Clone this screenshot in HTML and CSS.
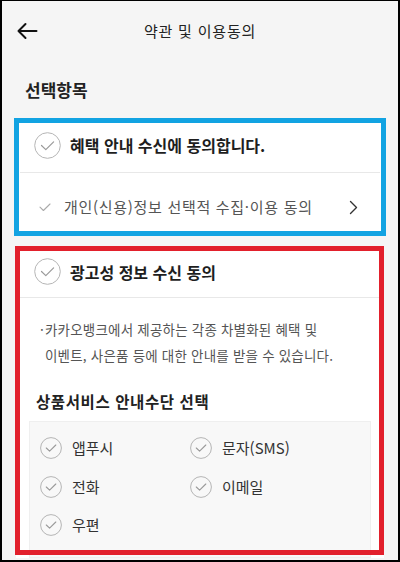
FILE: index.html
```html
<!DOCTYPE html>
<html lang="ko">
<head>
<meta charset="utf-8">
<title>약관 및 이용동의</title>
<link rel="stylesheet" href="styles.css">
</head>
<body>
<div class="frame">
  <header class="topbar">
    <div class="back">
      <svg width="22" height="18" viewBox="0 0 22 18" fill="none" stroke="#111" stroke-width="2" stroke-linecap="round" stroke-linejoin="round">
        <path d="M20.5 9H2.5M9.5 2L2.5 9L9.5 16"/>
      </svg>
    </div>
    <h1 class="title">약관 및 이용동의</h1>
    <div></div>
  </header>

  <h2 class="section-title">선택항목</h2>

  <section class="card">
    <div class="card-head">
      <span class="circle big">
        <svg width="27" height="27" viewBox="0 0 27 27" fill="none">
          <circle cx="13.5" cy="13.5" r="12.8" stroke="#b5b5b5" stroke-width="1"/>
          <path d="M7.5 13.5L11.8 17.6L19.6 9.8" stroke="#9a9a9a" stroke-width="1.2" stroke-linecap="round" stroke-linejoin="round"/>
        </svg>
      </span>
      <span class="head-text strong">혜택 안내 수신에 동의합니다.</span>
    </div>
    <div class="divider"></div>
    <div class="sub-row">
      <svg class="small-check" width="12" height="9" viewBox="0 0 12 9" fill="none">
        <path d="M1 4.2L4.4 7.5L11 1" stroke="#aaaaaa" stroke-width="1.1" stroke-linecap="round" stroke-linejoin="round"/>
      </svg>
      <span class="sub-text">개인(신용)정보 선택적 수집·이용 동의</span>
      <svg class="chev" width="9" height="15" viewBox="0 0 9 15" fill="none">
        <path d="M1.5 1.5L7.5 7.5L1.5 13.5" stroke="#333" stroke-width="1.4" stroke-linecap="round" stroke-linejoin="round"/>
      </svg>
    </div>
  </section>

  <section class="card card2">
    <div class="card-head head2">
      <span class="circle big">
        <svg width="27" height="27" viewBox="0 0 27 27" fill="none">
          <circle cx="13.5" cy="13.5" r="12.8" stroke="#b5b5b5" stroke-width="1"/>
          <path d="M7.5 13.5L11.8 17.6L19.6 9.8" stroke="#9a9a9a" stroke-width="1.2" stroke-linecap="round" stroke-linejoin="round"/>
        </svg>
      </span>
      <span class="head-text">광고성 정보 수신 동의</span>
    </div>
    <div class="divider"></div>
    <div class="desc">
      <span class="bullet">·</span>
      <p class="desc-text">카카오뱅크에서 제공하는 각종 차별화된 혜택 및<br>이벤트, 사은품 등에 대한 안내를 받을 수 있습니다.</p>
    </div>
    <h3 class="sub-title">상품서비스 안내수단 선택</h3>
    <div class="options">
      <label class="opt"><span class="circle sm"><svg width="22" height="22" viewBox="0 0 22 22" fill="none"><circle cx="11" cy="11" r="10.4" stroke="#b5b5b5" stroke-width="1"/><path d="M6.3 11L9.6 14.2L15.8 8" stroke="#9a9a9a" stroke-width="1.1" stroke-linecap="round" stroke-linejoin="round"/></svg></span><span class="opt-text">앱푸시</span></label>
      <label class="opt"><span class="circle sm"><svg width="22" height="22" viewBox="0 0 22 22" fill="none"><circle cx="11" cy="11" r="10.4" stroke="#b5b5b5" stroke-width="1"/><path d="M6.3 11L9.6 14.2L15.8 8" stroke="#9a9a9a" stroke-width="1.1" stroke-linecap="round" stroke-linejoin="round"/></svg></span><span class="opt-text">문자(SMS)</span></label>
      <label class="opt"><span class="circle sm"><svg width="22" height="22" viewBox="0 0 22 22" fill="none"><circle cx="11" cy="11" r="10.4" stroke="#b5b5b5" stroke-width="1"/><path d="M6.3 11L9.6 14.2L15.8 8" stroke="#9a9a9a" stroke-width="1.1" stroke-linecap="round" stroke-linejoin="round"/></svg></span><span class="opt-text">전화</span></label>
      <label class="opt"><span class="circle sm"><svg width="22" height="22" viewBox="0 0 22 22" fill="none"><circle cx="11" cy="11" r="10.4" stroke="#b5b5b5" stroke-width="1"/><path d="M6.3 11L9.6 14.2L15.8 8" stroke="#9a9a9a" stroke-width="1.1" stroke-linecap="round" stroke-linejoin="round"/></svg></span><span class="opt-text">이메일</span></label>
      <label class="opt"><span class="circle sm"><svg width="22" height="22" viewBox="0 0 22 22" fill="none"><circle cx="11" cy="11" r="10.4" stroke="#b5b5b5" stroke-width="1"/><path d="M6.3 11L9.6 14.2L15.8 8" stroke="#9a9a9a" stroke-width="1.1" stroke-linecap="round" stroke-linejoin="round"/></svg></span><span class="opt-text">우편</span></label>
    </div>
  </section>

  <div class="mark mark-blue"></div>
  <div class="mark mark-red"></div>
</div>
</body>
</html>
```

FILE: styles.css
```css
* { box-sizing: border-box; }
html, body { margin: 0; padding: 0; }
body {
  font-family: "Noto Sans CJK KR", "Noto Sans", "Liberation Sans", sans-serif;
  color: #222;
  background: #f5f5f5;
}
.frame {
  position: relative;
  width: 400px;
  height: 562px;
  overflow: hidden;
  background: #f5f5f5;
  border-style: solid;
  border-color: #000;
  border-width: 1px 2px 2px 2px;
}
.topbar {
  height: 60px;
  display: grid;
  grid-template-columns: 1fr auto 1fr;
  align-items: center;
}
.back {
  padding-left: 14px;
  display: flex;
  align-items: center;
  height: 100%;
}
.back svg { display: block; }
.title {
  margin: 0;
  font-size: 15px;
  font-weight: 400;
  color: #222;
  line-height: 20px;
  letter-spacing: 0.8px;
}
.section-title {
  margin: 17px 0 16px 23px;
  font-size: 17px;
  line-height: 24px;
  font-weight: 700;
  color: #222;
}
.card {
  background: #fff;
  margin: 0 14px;
}
.card2 { margin-top: 10px; }
.card-head {
  height: 54px;
  display: flex;
  align-items: center;
  padding-left: 18px;
  gap: 9px;
}
.head2 { height: 51px; }
.circle { display: flex; flex: none; }
.circle svg { display: block; }
.head-text {
  font-size: 16px;
  font-weight: 700;
  color: #1e1e1e;
  line-height: 22px;
}
.divider {
  height: 1px;
  background: #e8e8e8;
  margin: 0 4px;
}
.sub-row {
  height: 63px;
  padding-top: 5px;
  display: flex;
  align-items: center;
  padding-left: 23px;
  padding-right: 26px;
}
.small-check { flex: none; display: block; margin-right: 13px; }
.sub-text {
  flex: 1;
  font-size: 15px;
  color: #555;
  line-height: 20px;
  letter-spacing: 0.7px;
}
.chev { display: block; flex: none; }
.desc {
  display: flex;
  padding: 18px 12px 0 24px;
}
.bullet {
  width: 5px;
  font-size: 13.5px;
  line-height: 26px;
  color: #555;
  flex: none;
}
.desc-text {
  margin: 0;
  font-size: 13.5px;
  line-height: 26px;
  color: #555;
  letter-spacing: 0.2px;
}
.sub-title {
  margin: 22px 0 0 20px;
  font-size: 15.5px;
  line-height: 22px;
  font-weight: 700;
  color: #222;
  letter-spacing: 0.6px;
}
.options {
  margin: 9px 13px 0 13px;
  background: #f8f8f8;
  border: 1px solid #efefef;
  padding: 7px 10px 12px 10px;
  display: grid;
  grid-template-columns: 150px 1fr;
  grid-auto-rows: 38.5px;
}
.opt {
  display: flex;
  align-items: center;
  gap: 10px;
}
.opt-text {
  font-size: 15px;
  color: #333;
  line-height: 20px;
}
.mark {
  position: absolute;
  border-style: solid;
  border-width: 5px;
  pointer-events: none;
}
.mark-blue {
  border-color: #12a3e2;
  left: 12px;
  top: 117px;
  width: 372px;
  height: 118px;
}
.mark-red {
  border-color: #e2202c;
  left: 13px;
  top: 245px;
  width: 369px;
  height: 309px;
}
```
